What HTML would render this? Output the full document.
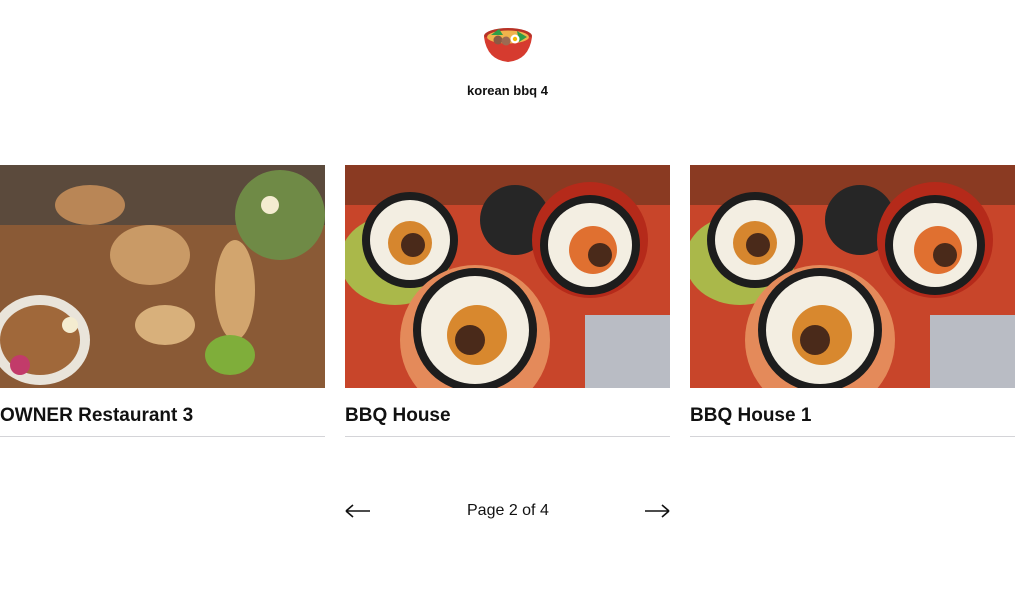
<!DOCTYPE html>
<html><head><meta charset="utf-8"><style>
body{margin:0;width:1015px;height:606px;background:#fff;font-family:"Liberation Sans",sans-serif;overflow:hidden;position:relative;color:#111}
.logo{position:absolute;left:482px;top:26px}
.t{position:absolute;top:83px;left:0;width:1015px;text-align:center;font-size:13px;font-weight:bold}
.card{position:absolute;top:165px;width:325px}
.img{width:325px;height:223px;overflow:hidden}
.card h2{margin:0;position:absolute;top:240px;left:0;font-size:19px;font-weight:bold}
.card .ln{position:absolute;top:271px;left:0;width:325px;height:1px;background:#d4d4d8}
.pg{position:absolute;top:502px;font-size:16px}
</style></head><body>
<svg class="logo" width="52" height="38" viewBox="0 0 52 38">
<ellipse cx="26" cy="10" rx="24" ry="8" fill="#b83226"/>
<path d="M2 11 Q5 34 26 36 Q47 34 50 11 Z" fill="#d63b2f"/>
<ellipse cx="26" cy="11" rx="21" ry="6.5" fill="#f0b44c"/>
<path d="M9 9 L17 3 L21 9Z M35 5 L45 11 L37 16Z" fill="#2e9e48"/>
<circle cx="16" cy="14" r="4.5" fill="#8a5a44"/><circle cx="24" cy="15" r="4.5" fill="#9c6a52"/>
<circle cx="33" cy="13" r="4.5" fill="#fff"/><circle cx="33" cy="13" r="2.2" fill="#f5b800"/>
</svg>
<div class="t">korean bbq 4</div>

<div class="card" style="left:0">
<div class="img"><svg width="325" height="223">
<rect width="325" height="223" fill="#8a5a36"/>
<rect y="0" width="325" height="60" fill="#5b4a3c"/>
<ellipse cx="280" cy="50" rx="45" ry="45" fill="#6f8a46"/>
<ellipse cx="40" cy="175" rx="50" ry="45" fill="#e9e4da"/>
<ellipse cx="40" cy="175" rx="40" ry="35" fill="#a0683a"/>
<ellipse cx="150" cy="90" rx="40" ry="30" fill="#c99a66"/>
<ellipse cx="235" cy="125" rx="20" ry="50" fill="#d2a56e"/>
<ellipse cx="90" cy="40" rx="35" ry="20" fill="#b98656"/>
<ellipse cx="165" cy="160" rx="30" ry="20" fill="#d8b07b"/>
<ellipse cx="230" cy="190" rx="25" ry="20" fill="#7fae3a"/>
<circle cx="270" cy="40" r="9" fill="#f4ecd0"/><circle cx="70" cy="160" r="8" fill="#f4ecd0"/>
<circle cx="20" cy="200" r="10" fill="#c23b6a"/>
</svg></div>
<h2>OWNER Restaurant 3</h2><div class="ln"></div></div>

<div class="card" style="left:345px">
<div class="img"><svg width="325" height="223">
<rect width="325" height="223" fill="#c8452a"/>
<rect x="0" y="0" width="325" height="40" fill="#8a3a22"/>
<ellipse cx="50" cy="95" rx="55" ry="45" fill="#aab84a"/>
<circle cx="65" cy="75" r="48" fill="#1d1d1d"/><circle cx="65" cy="75" r="40" fill="#f3eee2"/><circle cx="65" cy="78" r="22" fill="#d6862e"/><circle cx="68" cy="80" r="12" fill="#4a2a1a"/>
<circle cx="170" cy="55" r="35" fill="#262626"/>
<circle cx="245" cy="75" r="58" fill="#b52a1a"/><circle cx="245" cy="80" r="50" fill="#1d1d1d"/><circle cx="245" cy="80" r="42" fill="#f3eee2"/><circle cx="248" cy="85" r="24" fill="#e07030"/><circle cx="255" cy="90" r="12" fill="#4a2a1a"/>
<circle cx="130" cy="175" r="75" fill="#e48a5a"/><circle cx="130" cy="165" r="62" fill="#1d1d1d"/><circle cx="130" cy="165" r="54" fill="#f3eee2"/><circle cx="132" cy="170" r="30" fill="#d8882e"/><circle cx="125" cy="175" r="15" fill="#4a2a1a"/>
<rect x="240" y="150" width="85" height="73" fill="#b9bcc4"/>
</svg></div>
<h2>BBQ House</h2><div class="ln"></div></div>

<div class="card" style="left:690px">
<div class="img"><svg width="325" height="223">
<rect width="325" height="223" fill="#c8452a"/>
<rect x="0" y="0" width="325" height="40" fill="#8a3a22"/>
<ellipse cx="50" cy="95" rx="55" ry="45" fill="#aab84a"/>
<circle cx="65" cy="75" r="48" fill="#1d1d1d"/><circle cx="65" cy="75" r="40" fill="#f3eee2"/><circle cx="65" cy="78" r="22" fill="#d6862e"/><circle cx="68" cy="80" r="12" fill="#4a2a1a"/>
<circle cx="170" cy="55" r="35" fill="#262626"/>
<circle cx="245" cy="75" r="58" fill="#b52a1a"/><circle cx="245" cy="80" r="50" fill="#1d1d1d"/><circle cx="245" cy="80" r="42" fill="#f3eee2"/><circle cx="248" cy="85" r="24" fill="#e07030"/><circle cx="255" cy="90" r="12" fill="#4a2a1a"/>
<circle cx="130" cy="175" r="75" fill="#e48a5a"/><circle cx="130" cy="165" r="62" fill="#1d1d1d"/><circle cx="130" cy="165" r="54" fill="#f3eee2"/><circle cx="132" cy="170" r="30" fill="#d8882e"/><circle cx="125" cy="175" r="15" fill="#4a2a1a"/>
<rect x="240" y="150" width="85" height="73" fill="#b9bcc4"/>
</svg></div>
<h2>BBQ House 1</h2><div class="ln"></div></div>

<svg style="position:absolute;left:345px;top:503px" width="26" height="16"><path d="M1 8 H25 M1 8 L8 2 M1 8 L8 14" stroke="#111" stroke-width="1.6" fill="none"/></svg>
<div class="pg" style="left:467px">Page 2 of 4</div>
<svg style="position:absolute;left:644px;top:503px" width="26" height="16"><path d="M1 8 H25 M25 8 L18 2 M25 8 L18 14" stroke="#111" stroke-width="1.6" fill="none"/></svg>
</body></html>
